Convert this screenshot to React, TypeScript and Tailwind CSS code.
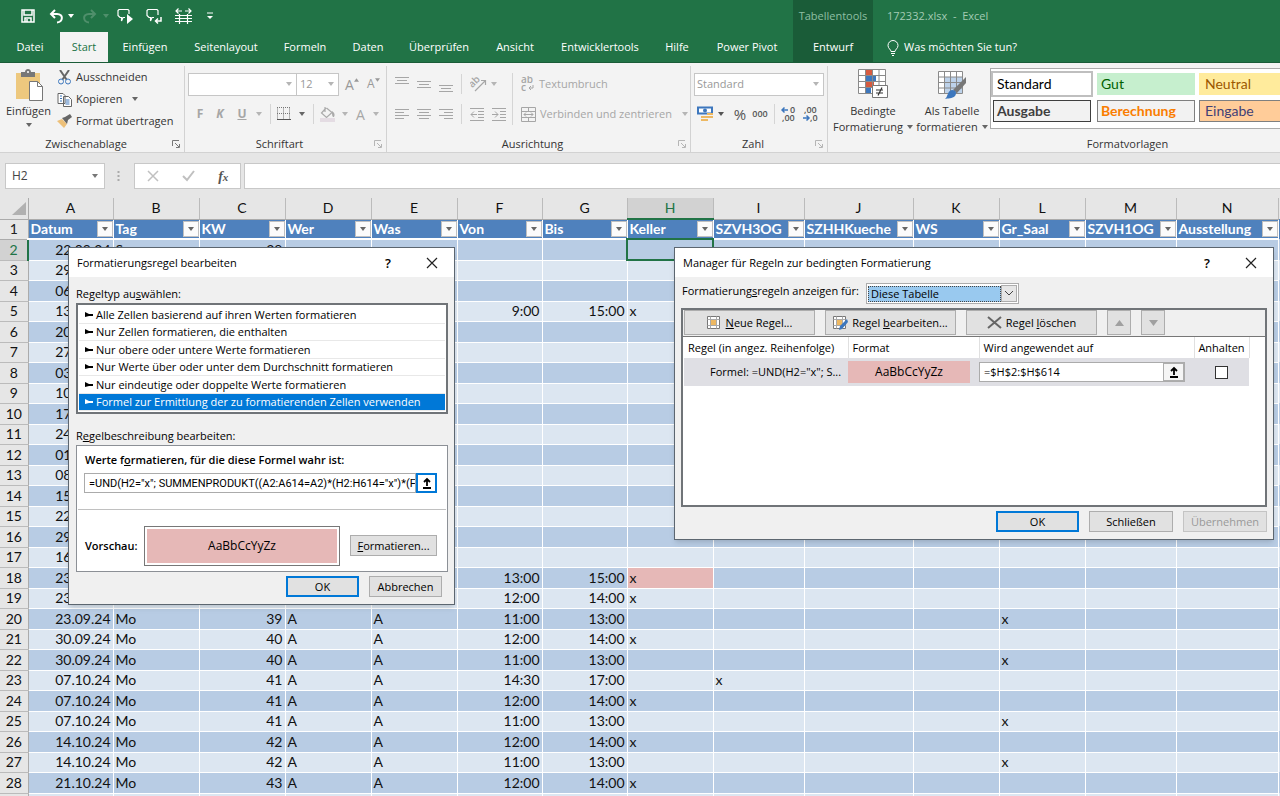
import type { ReactNode } from 'react'

const tabs = [
  { name: 'Datei', width: 'w-[60px]' },
  { name: 'Start', width: 'w-12', active: true },
  { name: 'Einfügen', width: 'w-[74px]' },
  { name: 'Seitenlayout', width: 'w-[88px]' },
  { name: 'Formeln', width: 'w-[70px]' },
  { name: 'Daten', width: 'w-14' },
  { name: 'Überprüfen', width: 'w-[86px]' },
  { name: 'Ansicht', width: 'w-[66px]' },
  { name: 'Entwicklertools', width: 'w-[104px]' },
  { name: 'Hilfe', width: 'w-[50px]' },
  { name: 'Power Pivot', width: 'w-[90px]' },
]

const columns = [
  { letter: 'A', title: 'Datum', width: 'w-[85px]' },
  { letter: 'B', title: 'Tag', width: 'w-[86px]' },
  { letter: 'C', title: 'KW', width: 'w-[86px]' },
  { letter: 'D', title: 'Wer', width: 'w-[86px]' },
  { letter: 'E', title: 'Was', width: 'w-[86px]' },
  { letter: 'F', title: 'Von', width: 'w-[85px]' },
  { letter: 'G', title: 'Bis', width: 'w-[85px]' },
  { letter: 'H', title: 'Keller', width: 'w-[86px]' },
  { letter: 'I', title: 'SZVH3OG', width: 'w-[91px]' },
  { letter: 'J', title: 'SZHHKueche', width: 'w-[109px]' },
  { letter: 'K', title: 'WS', width: 'w-[86px]' },
  { letter: 'L', title: 'Gr_Saal', width: 'w-[86px]' },
  { letter: 'M', title: 'SZVH1OG', width: 'w-[91px]' },
  { letter: 'N', title: 'Ausstellung', width: 'w-[102px]' },
]

// Datum, Tag, KW, Wer, Was, Von, Bis, column holding the x
const rows = [
  ['22.09.24', 'So', '38'],
  ['29.09.24', 'So', '39'],
  ['06.10.24', 'So', '40'],
  ['13.10.24', 'So', '41', 'A', 'A', '9:00', '15:00', 'H'],
  ['20.10.24', 'So', '42'],
  ['27.10.24', 'So', '43'],
  ['03.11.24', 'So', '44'],
  ['10.11.24', 'So', '45'],
  ['17.11.24', 'So', '46'],
  ['24.11.24', 'So', '47'],
  ['01.12.24', 'So', '48'],
  ['08.12.24', 'So', '49'],
  ['15.12.24', 'So', '50'],
  ['22.12.24', 'So', '51'],
  ['29.12.24', 'So', '52'],
  ['16.09.24', 'Mo', '38'],
  ['23.09.24', 'Mo', '39', 'A', 'A', '13:00', '15:00', 'H'],
  ['23.09.24', 'Mo', '39', 'A', 'A', '12:00', '14:00', 'H'],
  ['23.09.24', 'Mo', '39', 'A', 'A', '11:00', '13:00', 'L'],
  ['30.09.24', 'Mo', '40', 'A', 'A', '12:00', '14:00', 'H'],
  ['30.09.24', 'Mo', '40', 'A', 'A', '11:00', '13:00', 'L'],
  ['07.10.24', 'Mo', '41', 'A', 'A', '14:30', '17:00', 'I'],
  ['07.10.24', 'Mo', '41', 'A', 'A', '12:00', '14:00', 'H'],
  ['07.10.24', 'Mo', '41', 'A', 'A', '11:00', '13:00', 'L'],
  ['14.10.24', 'Mo', '42', 'A', 'A', '12:00', '14:00', 'H'],
  ['14.10.24', 'Mo', '42', 'A', 'A', '11:00', '13:00', 'L'],
  ['21.10.24', 'Mo', '43', 'A', 'A', '12:00', '14:00', 'H'],
  [],
]

const ruleTypes = [
  'Alle Zellen basierend auf ihren Werten formatieren',
  'Nur Zellen formatieren, die enthalten',
  'Nur obere oder untere Werte formatieren',
  'Nur Werte über oder unter dem Durchschnitt formatieren',
  'Nur eindeutige oder doppelte Werte formatieren',
  'Formel zur Ermittlung der zu formatierenden Zellen verwenden',
]

function Caret({ className = 'text-[#666]' }: { className?: string }) {
  return (
    <svg width="6" height="4" viewBox="0 0 6 4" className={`shrink-0 ${className}`}>
      <path d="M0 0h6L3 4z" fill="currentColor" />
    </svg>
  )
}

function IconButton({
  label,
  className = '',
  children,
}: {
  label: string
  className?: string
  children: ReactNode
}) {
  return (
    <button aria-label={label} className={`flex items-center justify-center shrink-0 ${className}`}>
      {children}
    </button>
  )
}

function Lines({ d }: { d: string }) {
  return (
    <svg width="14" height="16" viewBox="0 0 14 16" className="text-[#a6a6a6]">
      <path d={d} stroke="currentColor" fill="none" />
    </svg>
  )
}

function Group({
  title,
  width,
  launcher,
  children,
}: {
  title: string
  width: string
  launcher?: string
  children: ReactNode
}) {
  return (
    <section className={`flex flex-col mt-[3px] border-r border-[#d2d2d2] ${width}`}>
      <div className="flex-1 min-h-0">{children}</div>
      <div className="flex items-center h-4 pr-1">
        <h2 className="flex-1 text-center text-[11px] leading-[16px] text-[#333]">{title}</h2>
        {launcher && (
          <IconButton label={`${title} öffnen`} className={launcher}>
            <svg width="8" height="8" viewBox="0 0 8 8">
              <path d="M.5 6V.5H7M3 3l4 4M7.500 4v3.500H4" fill="none" stroke="currentColor" />
            </svg>
          </IconButton>
        )}
      </div>
    </section>
  )
}

function TitleBar() {
  return (
    <header className="flex h-[63px] bg-[#217346] text-white border-b border-[#1a5c38]">
      <div className="flex flex-col w-[793px]">
        <div className="flex items-center h-[33px] pl-[21px]">
          <IconButton label="Speichern">
            <svg width="14" height="14" viewBox="0 0 14 14">
              <path d="M1 1h12v12H1zM3 1v5h8V1M4 13V9h6v4M6 10v3" fill="none" stroke="white" strokeWidth="1.500" />
            </svg>
          </IconButton>
          <IconButton label="Rückgängig" className="ml-3.5 gap-1">
            <svg width="15" height="15" viewBox="0 0 15 15">
              <path d="M6 1L2 5l4 4M2 5h6c7 0 6 8 0 8.500" fill="none" stroke="white" strokeWidth="2" />
            </svg>
            <Caret className="text-white" />
          </IconButton>
          <IconButton label="Wiederholen" className="ml-2 gap-1.5 text-[#4f8f6b]">
            <svg width="15" height="15" viewBox="0 0 15 15">
              <path d="M9 1l4 4-4 4M13 5H7c-7 0-6 8 0 8.500" fill="none" stroke="currentColor" strokeWidth="2" />
            </svg>
            <Caret className="text-[#4f8f6b]" />
          </IconButton>
          <IconButton label="Nächster Kommentar" className="ml-2">
            <svg width="17" height="17" viewBox="0 0 17 17">
              <path d="M8 9.500H6L4.500 13V9.500H3l-2-2v-5l1-1h9l1 1V6" fill="none" stroke="white" strokeWidth="1.200" />
              <path d="M10 6l6 5-6 5z" fill="white" />
            </svg>
          </IconButton>
          <IconButton label="Vorheriger Kommentar" className="ml-3">
            <svg width="17" height="17" viewBox="0 0 17 17">
              <path d="M8 9.500H6L4.500 13V9.500H3l-2-2v-5l1-1h9l1 1V7" fill="none" stroke="white" strokeWidth="1.200" />
              <path d="M15 9v4h-5M12 10.500L9.500 13l2.500 2.500" fill="none" stroke="white" strokeWidth="1.500" />
            </svg>
          </IconButton>
          <IconButton label="Spaltenbreite" className="ml-3">
            <svg width="17" height="16" viewBox="0 0 17 16">
              <path d="M1 3h6M10 3h6M3.500.5L1 3l2.500 2.500M13.500.5L16 3l-2.500 2.500M0 7.500h17M0 10.500h17M0 13.500h17M4.500 6v10M12.500 6v10" fill="none" stroke="white" strokeWidth="1.200" />
            </svg>
          </IconButton>
          <IconButton label="Symbolleiste anpassen" className="ml-3.5">
            <svg width="8" height="8" viewBox="0 0 8 8">
              <path d="M1 1h6" stroke="white" />
              <path d="M1 4h6L4 7z" fill="white" />
            </svg>
          </IconButton>
        </div>
        <nav className="flex flex-1 text-[11px] font-medium">
          {tabs.map((tab) => (
            <button
              key={tab.name}
              className={`${tab.width} shrink-0 whitespace-nowrap ${
                tab.active ? 'bg-[#f3f3f3] text-[#217346] h-[30px]' : ''
              }`}
            >
              {tab.name}
            </button>
          ))}
        </nav>
      </div>
      <div className="flex flex-col w-20 bg-[#1a5c38]">
        <span className="h-[33px] leading-[32px] text-center text-[11px] text-[#8ebfa3]">Tabellentools</span>
        <button className="flex-1 text-[11px] font-medium">Entwurf</button>
      </div>
      <div className="flex flex-col flex-1 pl-3.5">
        <span className="h-[33px] leading-[32px] text-[11px] text-[#a3cbb4] whitespace-pre">172332.xlsx  -  Excel</span>
        <button className="flex flex-1 items-center gap-[5px] text-[11px] font-medium">
          <svg width="12" height="16" viewBox="0 0 12 16">
            <path d="M4 11.500c0-2-3-3-3-6a5 5 0 0110 0c0 3-3 4-3 6zM4 13.500h4M5 15.500h2" fill="none" stroke="white" />
          </svg>
          Was möchten Sie tun?
        </button>
      </div>
    </header>
  )
}

function Clipboard() {
  return (
    <Group title="Zwischenablage" width="w-[185px]" launcher="text-[#777]">
      <div className="flex">
        <button className="flex flex-col items-center w-[57px] pt-[3px] text-[11px] leading-[16px]">
          <svg width="30" height="32" viewBox="0 0 30 32">
            <rect x="2" y="4" width="24" height="26" fill="#edc87e" />
            <path d="M7 3h4c0-4 6-4 6 0h4v5H7z" fill="#777" />
            <circle cx="14" cy="3" r="1" fill="white" />
            <path d="M15.500 12.500h8l5 5v14h-13z" fill="white" stroke="#777" />
            <path d="M23.500 12.500v5h5" fill="none" stroke="#777" />
          </svg>
          <span className="mt-0.5">Einfügen</span>
          <Caret className="mt-1 text-[#666]" />
        </button>
        <div className="flex flex-col text-[11px]">
          <button className="flex items-center h-[22px] gap-1">
            <svg width="15" height="15" viewBox="0 0 15 15">
              <path d="M3 0l6.500 9.500M12 0L5.500 9.500" stroke="#666" strokeWidth="2" />
              <circle cx="4" cy="11.500" r="2.500" fill="none" stroke="#3d77bd" />
              <circle cx="11" cy="11.500" r="2.500" fill="none" stroke="#3d77bd" />
            </svg>
            Ausschneiden
          </button>
          <button className="flex items-center h-[22px] gap-1">
            <svg width="15" height="15" viewBox="0 0 15 15">
              <path d="M1 1.500h5l2 2v8H1zM6.500 4.500h5l3 3v7h-8z" fill="white" stroke="#666" />
              <path d="M3 4h2M3 6.500h2M3 9h2M8.500 8h4M8.500 10h4M8.500 12h4" stroke="#3d77bd" />
            </svg>
            Kopieren
            <Caret className="ml-1.5 text-[#666]" />
          </button>
          <button className="flex items-center h-[22px] gap-1">
            <svg width="15" height="14" viewBox="0 0 15 14">
              <path d="M0 7l5-2 5 5-3 4z" fill="#edc079" />
              <path d="M5 4l3-1 5-3 2 3-4 3-1 4z" fill="#666" />
            </svg>
            Format übertragen
          </button>
        </div>
      </div>
    </Group>
  )
}

function Font() {
  return (
    <Group title="Schriftart" width="w-[202px]" launcher="text-[#b5b5b5]">
      <div className="flex items-center h-9 pl-[3px]">
        <div className="flex items-center w-[109px] h-[23px] bg-white border border-[#c6c6c6] pr-1">
          <select aria-label="Schriftart" className="flex-1 w-0 h-full appearance-none">
            <option></option>
          </select>
          <Caret className="text-[#b5b5b5]" />
        </div>
        <div className="flex items-center w-[42px] h-[23px] bg-white border border-l-0 border-[#c6c6c6] pl-[3px] pr-1">
          <select aria-label="Schriftgrad" className="flex-1 w-0 h-full appearance-none text-[11px] text-[#999]">
            <option>12</option>
          </select>
          <Caret className="text-[#b5b5b5]" />
        </div>
        <button aria-label="Schriftgrad vergrößern" className="flex w-[22px] ml-1.5 text-[14px] text-[#999]">
          A<svg width="5" height="4" viewBox="0 0 6 4" className="mt-1"><path d="M0 4h6L3 0z" fill="currentColor" /></svg>
        </button>
        <button aria-label="Schriftgrad verkleinern" className="flex items-center w-4 text-[12px] text-[#999]">
          A<svg width="5" height="4" viewBox="0 0 6 4" className="mb-2"><path d="M0 0h6L3 4z" fill="currentColor" /></svg>
        </button>
      </div>
      <div className="flex items-center h-6 pl-[9px] text-[12px] text-[#a6a6a6]">
        <button className="w-3 font-bold">F</button>
        <button className="w-3 ml-2 font-bold italic">K</button>
        <button className="w-3 ml-2.5 font-bold underline">U</button>
        <Caret className="ml-2 text-[#b5b5b5]" />
        <span className="w-px h-5 ml-2 bg-[#d5d5d5]" />
        <IconButton label="Rahmen" className="ml-1.5 gap-2">
          <svg width="14" height="14" viewBox="0 0 14 14">
            <path d="M.5.500v12M6.500.500v12M12.500.500v12M0 .5h13M0 6.500h13" stroke="#777" strokeDasharray="1 1" />
            <path d="M0 12.500h14" stroke="#555" />
          </svg>
          <Caret className="text-[#666]" />
        </IconButton>
        <span className="w-px h-5 ml-2 bg-[#d5d5d5]" />
        <IconButton label="Füllfarbe" className="ml-1.5 gap-1.5">
          <svg width="16" height="16" viewBox="0 0 16 16">
            <path d="M5 1v5M6 2L1.500 7l5 4.500L12 6.500 6.500 2" fill="none" stroke="#aaa" strokeWidth="1.200" />
            <path d="M12 5c3 2 3 4 2 6-2 0-2-2-2-6z" fill="#aaa" />
            <path d="M0 12h15v4H0z" fill="#e4dce3" />
          </svg>
          <Caret className="text-[#b5b5b5]" />
        </IconButton>
        <button aria-label="Schriftfarbe" className="flex items-center gap-2 ml-2 text-[14px]">
          A
          <Caret className="text-[#b5b5b5]" />
        </button>
      </div>
    </Group>
  )
}

function Alignment() {
  return (
    <Group title="Ausrichtung" width="w-[304px]" launcher="text-[#b5b5b5]">
      <div className="flex pl-2 pt-[3px]">
        <div className="flex flex-col">
          <div className="flex items-center gap-2 h-[30px]">
            <IconButton label="Oben ausrichten"><Lines d="M0 1.500h14M2 4.500h10M0 7.500h14" /></IconButton>
            <IconButton label="Zentriert ausrichten"><Lines d="M0 5.500h14M2 8.500h10M0 11.500h14" /></IconButton>
            <IconButton label="Unten ausrichten"><Lines d="M0 9.500h14M2 12.500h10M0 15.500h14" /></IconButton>
            <span className="w-px h-5 bg-[#d5d5d5]" />
            <IconButton label="Ausrichtung drehen" className="gap-1 text-[#a6a6a6]">
              <svg width="17" height="16" viewBox="0 0 17 16">
                <text x="0" y="9" fontSize="10" fill="currentColor" transform="rotate(-45 5 8)" fontWeight="600">ab</text>
                <path d="M5 15L15 5M11 4.500h4.500V9" fill="none" stroke="currentColor" strokeWidth="1.200" />
              </svg>
              <Caret className="text-[#b5b5b5]" />
            </IconButton>
          </div>
          <div className="flex items-center gap-2 h-[30px]">
            <IconButton label="Linksbündig"><Lines d="M0 3.500h14M0 6.500h9M0 9.500h14M0 12.500h9" /></IconButton>
            <IconButton label="Zentriert"><Lines d="M0 3.500h14M2 6.500h10M0 9.500h14M2 12.500h10" /></IconButton>
            <IconButton label="Rechtsbündig"><Lines d="M0 3.500h14M5 6.500h9M0 9.500h14M5 12.500h9" /></IconButton>
            <span className="w-px h-5 bg-[#d5d5d5]" />
            <IconButton label="Einzug verkleinern"><Lines d="M0 2.500h14M8 5.500h6M8 8.500h6M8 11.500h6M0 14.500h14M7 8.500H1M4 5.500l-3 3 3 3" /></IconButton>
            <IconButton label="Einzug vergrößern"><Lines d="M0 2.500h14M8 5.500h6M8 8.500h6M8 11.500h6M0 14.500h14M0 8.500h6M3 5.500l3 3-3 3" /></IconButton>
          </div>
        </div>
        <span className="w-px h-[52px] mt-1 ml-1.5 bg-[#d5d5d5]" />
        <div className="flex flex-col pl-2 text-[11px] text-[#a6a6a6]">
          <button className="flex items-center h-[30px] gap-1">
            <svg width="14" height="16" viewBox="0 0 14 16" fill="currentColor">
              <text x="0" y="7" fontSize="10" fontWeight="600">ab</text>
              <text x="0" y="15" fontSize="10" fontWeight="600">c</text>
              <path d="M12 9v3H8M10 10l-2 2 2 2" fill="none" stroke="currentColor" />
            </svg>
            Textumbruch
          </button>
          <button className="flex items-center h-[30px] gap-1 whitespace-nowrap">
            <svg width="15" height="15" viewBox="0 0 15 15">
              <path d="M.5.500h14v14H.5zM.5 4.500h14M.5 10.500h14M7.500.500v4M7.500 10.500v4M3 7.500h9M5 5.500l-2 2 2 2M10 5.500l2 2-2 2" fill="none" stroke="currentColor" />
            </svg>
            Verbinden und zentrieren
            <Caret className="ml-1.5 text-[#b5b5b5]" />
          </button>
        </div>
      </div>
    </Group>
  )
}

function NumberGroup() {
  return (
    <Group title="Zahl" width="w-[137px]" launcher="text-[#b5b5b5]">
      <div className="flex items-center h-9 px-[3px]">
        <div className="flex items-center flex-1 h-[23px] bg-white border border-[#c6c6c6] pl-0.5 pr-1">
          <select aria-label="Zahlenformat" className="flex-1 w-0 h-full appearance-none text-[11px] text-[#999]">
            <option>Standard</option>
          </select>
          <Caret className="text-[#b5b5b5]" />
        </div>
      </div>
      <div className="flex items-center h-6 pl-1.5">
        <IconButton label="Buchhaltungszahlenformat" className="gap-1">
          <svg width="17" height="16" viewBox="0 0 17 16">
            <path d="M1 1.500h14v6H1z" fill="white" stroke="#3d77bd" strokeWidth="2" />
            <circle cx="8" cy="4.500" r="2" fill="#3d77bd" />
            <path d="M10 8h6M4 11h6M10 11h6M4 14h7" stroke="#edb862" strokeWidth="2" />
          </svg>
          <Caret className="text-[#555]" />
        </IconButton>
        <button className="w-4 ml-2 text-[15px] text-[#555]">%</button>
        <button className="w-4 ml-1 text-[9px] font-semibold text-[#555]">000</button>
        <span className="w-px h-5 ml-1.5 bg-[#d5d5d5]" />
        <IconButton label="Dezimalstelle hinzufügen" className="ml-1.5">
          <svg width="16" height="16" viewBox="0 0 16 16" fontSize="9" fontWeight="600" fill="#555">
            <path d="M7 4H1M3.500 1.500L1 4l2.500 2.500" fill="none" stroke="#3d77bd" strokeWidth="1.500" />
            <text x="9" y="7">0</text>
            <text x="1" y="15">,00</text>
          </svg>
        </IconButton>
        <IconButton label="Dezimalstelle löschen" className="ml-1.5">
          <svg width="16" height="16" viewBox="0 0 16 16" fontSize="9" fontWeight="600" fill="#555">
            <text x="1" y="7">,00</text>
            <text x="7" y="15">,0</text>
            <path d="M0 12h6M3.500 9.500L6 12l-2.500 2.500" fill="none" stroke="#3d77bd" strokeWidth="1.500" />
          </svg>
        </IconButton>
      </div>
    </Group>
  )
}

function Styles() {
  return (
    <section className="flex flex-col flex-1 min-w-0 mt-[3px]">
      <div className="flex flex-1 min-h-0">
        <button className="flex flex-col items-center w-[90px] pt-[3px] text-[11px] leading-[16px] whitespace-nowrap">
          <svg width="30" height="30" viewBox="0 0 30 30">
            <path d="M1 1h26v24H1z" fill="white" />
            <path d="M8 1h6v5H8zM8 13h8v5H8z" fill="#d65a3f" />
            <path d="M8 7h10v6H8zM8 19h5v6H8z" fill="#3d77bd" />
            <path d="M.5.500h27v24H.5zM0 6.500h27M0 12.500h27M0 18.500h27M7.500 0v24M14.500 0v24M21 0v24" fill="none" stroke="#8a8a8a" />
            <path d="M14.500 16.500h15v12h-15z" fill="white" stroke="#777" />
            <path d="M18 21h7M18 24h7M24 18.500l-4 8" stroke="#333" strokeWidth="1.200" />
          </svg>
          <span className="mt-1">Bedingte</span>
          <span className="flex items-center gap-1">Formatierung <Caret /></span>
        </button>
        <button className="flex flex-col items-center w-[68px] pt-[3px] text-[11px] leading-[16px] whitespace-nowrap">
          <svg width="30" height="30" viewBox="0 0 30 30">
            <path d="M1.500 2.500h24v22h-24z" fill="white" />
            <path d="M8 8h17v16H8z" fill="#bdd2ea" />
            <path d="M1.500 2.500h24v22h-24zM1 8h24M1 13.500h24M1 19h24M7.500 2v22M13.500 2v22M19.500 2v22" fill="none" stroke="#8a8a8a" />
            <path d="M29 8v6l-9 10-4-3z" fill="#777" />
            <path d="M15 21c4 0 5 3 3 6-3 3-7 2-10 3 3-2 2-8 7-9z" fill="#3d77bd" />
          </svg>
          <span className="mt-1">Als Tabelle</span>
          <span className="flex items-center gap-1">formatieren <Caret /></span>
        </button>
        <div className="flex-1 h-[61px] ml-1 mt-0.5 pt-0.5 bg-white border border-r-0 border-[#ababab] overflow-hidden">
          <div className="grid grid-cols-[102px_98px_98px] gap-x-1 gap-y-[3px] text-[14px] leading-[20px] text-left font-['Lato',sans-serif] items-center">
            <button className="h-[26px] pl-1 text-left border-2 border-[#bfbfbf] text-black">Standard</button>
            <button className="h-[22px] pl-1 text-left bg-[#c6efce] text-[#006100]">Gut</button>
            <button className="h-[22px] pl-1.5 text-left bg-[#ffeb9c] text-[#9c5700]">Neutral</button>
            <button className="h-[22px] mx-0.5 pl-[3px] text-left bg-[#f2f2f2] border border-[#3f3f3f] text-[#3f3f3f] font-bold">Ausgabe</button>
            <button className="h-[22px] pl-[3px] text-left bg-[#f2f2f2] border border-[#7f7f7f] text-[#fa7d00] font-bold">Berechnung</button>
            <button className="h-[22px] pl-[5px] text-left bg-[#ffcc99] border border-[#7f7f7f] text-[#3f3f76]">Eingabe</button>
          </div>
        </div>
      </div>
      <h2 className="h-4 pl-[147px] text-center text-[11px] leading-[16px] text-[#333]">Formatvorlagen</h2>
    </section>
  )
}

function FormulaBar() {
  return (
    <div className="flex h-[45px] pt-2.5 pl-[5px] bg-[#e6e6e6]">
      <div className="flex items-center w-[100px] h-[26px] px-1.5 bg-white border border-[#c8c8c8]">
        <input aria-label="Namenfeld" defaultValue="H2" className="flex-1 w-0 text-[12px] text-[#444] outline-none" />
        <Caret className="text-[#777]" />
      </div>
      <svg width="3" height="12" viewBox="0 0 3 12" className="ml-3 mt-[7px]">
        <path d="M1.500 1v2M1.500 5v2M1.500 9v2" stroke="#aaa" strokeWidth="2" />
      </svg>
      <div className="flex items-center justify-around w-[107px] h-[26px] ml-3.5 bg-white border border-[#c8c8c8]">
        <IconButton label="Abbrechen">
          <svg width="12" height="12" viewBox="0 0 12 12"><path d="M1 1l10 10M11 1L1 11" stroke="#c0c0c0" strokeWidth="1.500" /></svg>
        </IconButton>
        <IconButton label="Eingeben">
          <svg width="13" height="12" viewBox="0 0 13 12"><path d="M1 6l4 4 7-9" fill="none" stroke="#c0c0c0" strokeWidth="2" /></svg>
        </IconButton>
        <button className="font-['Liberation_Serif',serif] italic font-bold text-[14px] text-[#555]">
          f<span className="text-[11px]">x</span>
        </button>
      </div>
      <input aria-label="Bearbeitungsleiste" className="flex-1 h-[26px] ml-[3px] bg-white border border-r-0 border-[#c8c8c8] outline-none" />
    </div>
  )
}

function Sheet() {
  return (
    <table className="table-fixed w-full border-collapse font-['Lato',sans-serif] text-[14px] leading-[18px] text-[#111]">
      <colgroup>
        <col className="w-7" />
        {columns.map((col) => (
          <col key={col.letter} className={col.width} />
        ))}
        <col />
      </colgroup>
      <thead>
        <tr className="h-[21px] bg-[#e6e6e6]">
          <th className="p-0 border-r border-b border-[#ababab]">
            <svg width="14" height="13" viewBox="0 0 14 13" className="ml-auto mr-0.5">
              <path d="M14 0v13H0z" fill="#b1b1b1" />
            </svg>
          </th>
          {columns.map((col) => (
            <th
              key={col.letter}
              className={`p-0 font-normal border-r border-r-[#bbb] ${
                col.letter === 'H'
                  ? 'bg-[#d2d2d2] text-[#217346] border-b-2 border-b-[#217346]'
                  : 'border-b border-b-[#ababab]'
              }`}
            >
              {col.letter}
            </th>
          ))}
          <th className="p-0" />
        </tr>
        <tr className="h-5 bg-[#4f81bd] text-white">
          <th className="p-0 font-normal bg-[#e6e6e6] text-[#222] border-r border-b border-[#ababab]">1</th>
          {columns.map((col) => (
            <th key={col.letter} className="p-0 border-r border-b-2 border-white">
              <div className="flex items-center justify-between pl-0.5 h-[18px]">
                <span className="whitespace-nowrap">{col.title}</span>
                <IconButton label={`${col.title} filtern`} className="w-4 h-4 bg-[#fbfbfb] border border-[#c0c0c0]">
                  <Caret />
                </IconButton>
              </div>
            </th>
          ))}
          <th className="p-0" />
        </tr>
      </thead>
      <tbody>
        {rows.map((row, i) => {
          const [date, day, week, who, what, from, to, mark] = row
          const cells = [date, day, week, who, what, from, to]
          return (
            <tr key={i} className="h-[21px] even:h-5 bg-[#dce6f1] odd:bg-[#b8cce4]">
              <th
                className={`p-0 font-normal border-b border-b-[#bbb] border-r ${
                  i === 0 ? 'bg-[#d2d2d2] text-[#217346] border-r-2 border-r-[#217346]' : 'bg-[#e6e6e6] border-r-[#ababab]'
                }`}
              >
                {i + 2}
              </th>
              {columns.map((col, c) => {
                const right = [0, 2, 5, 6].includes(c)
                const hit = col.letter === 'H' && i === 16
                const selected = col.letter === 'H' && i === 0
                return (
                  <td
                    key={col.letter}
                    className={`p-0 pl-0.5 whitespace-nowrap border-r border-b border-white ${
                      right ? 'text-right pr-0.5' : ''
                    } ${hit ? 'bg-[#e6b8b7]' : ''} ${selected ? 'outline-2 -outline-offset-1 outline-[#217346]' : ''}`}
                  >
                    {c < 7 ? cells[c] : mark === col.letter ? 'x' : ''}
                  </td>
                )
              })}
              <td className="p-0" />
            </tr>
          )
        })}
      </tbody>
    </table>
  )
}

function DialogTitle({ children }: { children: ReactNode }) {
  return (
    <div className="flex items-center h-[29px] pl-2 pr-4 bg-white">
      <h2 className="flex-1 text-[11px]">{children}</h2>
      <button className="w-4 text-[13px] font-semibold">?</button>
      <IconButton label="Schließen" className="ml-[30px]">
        <svg width="12" height="12" viewBox="0 0 12 12"><path d="M1 1l10 10M11 1L1 11" stroke="#222" strokeWidth="1.200" /></svg>
      </IconButton>
    </div>
  )
}

function PushButton({
  className = 'border border-[#adadad]',
  children,
  disabled,
}: {
  className?: string
  children: ReactNode
  disabled?: boolean
}) {
  return (
    <button
      disabled={disabled}
      className={`flex items-center justify-center gap-1 shrink-0 bg-[#e1e1e1] text-[11px] whitespace-nowrap disabled:text-[#999] ${className}`}
    >
      {children}
    </button>
  )
}

function RefIcon() {
  return (
    <svg width="10" height="12" viewBox="0 0 10 12">
      <path d="M5 9V3M2 5l3-3 3 3M1 11h8" fill="none" stroke="black" strokeWidth="1.800" />
    </svg>
  )
}

function RuleDialog() {
  return (
    <div
      role="dialog"
      aria-label="Formatierungsregel bearbeiten"
      className="absolute left-[68px] top-[247px] w-[387px] bg-[#f0f0f0] border border-[#5c6670] shadow-md text-[11px] leading-[16px] text-black"
    >
      <DialogTitle>Formatierungsregel bearbeiten</DialogTitle>
      <div className="pl-[7px] pr-1.5 pt-[9px] pb-[7px]">
        <h3>Regeltyp au<u>s</u>wählen:</h3>
        <ul className="mt-px p-px bg-white border-2 border-[#707478]">
          {ruleTypes.map((type, i) => (
            <li
              key={type}
              className={`flex items-center gap-[3px] h-[18px] even:h-[17px] pl-1.5 whitespace-nowrap border-b border-[#e8e8e8] ${
                i === 5 ? 'bg-[#0078d7] text-white' : ''
              }`}
            >
              <svg width="8" height="6" viewBox="0 0 8 6" className="shrink-0">
                <path d="M0 0l4 2h4v2H4L0 5z" fill="currentColor" />
              </svg>
              {type}
            </li>
          ))}
        </ul>
        <h3 className="mt-3.5">R<u>e</u>gelbeschreibung bearbeiten:</h3>
        <div className="mt-px bg-white border border-[#8c9096] pt-1.5">
          <label htmlFor="formula" className="block pl-2 font-semibold">
            Werte f<u>o</u>rmatieren, für die diese Formel wahr ist:
          </label>
          <div className="flex items-center h-5 mt-[5px] pl-[7px] pr-2.5">
            <input
              id="formula"
              defaultValue='=UND(H2="x"; SUMMENPRODUKT((A2:A614=A2)*(H2:H614="x")*(F'
              className="flex-1 w-0 h-5 pl-1 border border-[#ababab] font-['Roboto',sans-serif] text-[11px] outline-none"
            />
            <IconButton label="Bereich auswählen" className="w-[21px] h-5 border-2 border-[#0078d7]">
              <RefIcon />
            </IconButton>
          </div>
          <hr className="mt-4 mx-px border-[#c0c0c0]" />
          <div className="flex items-center h-[61px] pl-2 pt-2.5">
            <span className="w-[59px] font-semibold">Vorschau:</span>
            <div className="w-[196px] h-10 p-0.5 border border-[#777] bg-white">
              <div className="h-full bg-[#e6b8b7] text-center text-[12px] leading-[34px]">AaBbCcYyZz</div>
            </div>
            <PushButton className="w-[87px] h-[21px] ml-2.5 border border-[#adadad]">
              <span><u>F</u>ormatieren...</span>
            </PushButton>
          </div>
        </div>
        <div className="flex justify-end gap-2.5 pt-1 pr-1.5">
          <PushButton className="w-[73px] h-[21px] border-2 border-[#0078d7]">OK</PushButton>
          <PushButton className="w-[73px] h-[21px] border border-[#adadad]">Abbrechen</PushButton>
        </div>
      </div>
    </div>
  )
}

function TableIcon({ pen }: { pen?: boolean }) {
  return (
    <svg width="15" height="14" viewBox="0 0 15 14">
      <path d="M.5.500h12v12H.5z" fill="white" stroke="#777" />
      <path d="M.5 3.500h12M.5 9.500h12M3.500.500v12M9.500.500v12" stroke="#aaa" />
      <path d="M4 4h5v5H4z" fill="#edb862" />
      {pen && <path d="M14 3L7 10l-1 4 3-1 6-7z" fill="#3d77bd" />}
    </svg>
  )
}

function ManagerDialog() {
  return (
    <div
      role="dialog"
      aria-label="Manager für Regeln zur bedingten Formatierung"
      className="absolute left-[674px] top-[247px] w-[600px] bg-[#f0f0f0] border border-[#5c6670] shadow-md text-[11px] leading-[16px] text-black"
    >
      <DialogTitle>Manager für Regeln zur bedingten Formatierung</DialogTitle>
      <div className="px-1.5 pb-[7px]">
        <div className="flex h-[31px]">
          <label htmlFor="scope" className="w-[185px] pt-1.5 pl-px whitespace-nowrap">
            Formatierung<u>s</u>regeln anzeigen für:
          </label>
          <div className="flex items-center w-[153px] h-[21px] mt-1.5 p-px bg-white border border-[#adadad]">
            <select
              id="scope"
              className="flex-1 w-0 h-4 pl-0.5 appearance-none bg-[#99c9ef] border border-dotted border-[#444] text-[11px] leading-[14px]"
            >
              <option>Diese Tabelle</option>
            </select>
            <span className="flex items-center justify-center w-4 h-[17px] bg-[#e6e6e6] border border-[#adadad]">
              <svg width="8" height="5" viewBox="0 0 8 5"><path d="M0 0l4 4 4-4" fill="none" stroke="#444" /></svg>
            </span>
          </div>
        </div>
        <div className="h-[199px] bg-white border-2 border-[#707478]">
          <div className="flex h-[27px] px-px gap-2.5 bg-[#f0f0f0] border-b border-[#777]">
            <PushButton className="w-[131px] h-[25px] border border-[#adadad]">
              <TableIcon />
              <span><u>N</u>eue Regel...</span>
            </PushButton>
            <PushButton className="w-[131px] h-[25px] border border-[#adadad]">
              <TableIcon pen />
              <span>Regel <u>b</u>earbeiten...</span>
            </PushButton>
            <PushButton className="w-[131px] h-[25px] border border-[#adadad]">
              <svg width="15" height="13" viewBox="0 0 15 13"><path d="M1 1l13 11M14 1L1 12" stroke="#666" strokeWidth="2" /></svg>
              <span>Regel <u>l</u>öschen</span>
            </PushButton>
            <IconButton label="Nach oben" className="w-6 h-[25px] bg-[#e1e1e1] border border-[#adadad]">
              <svg width="9" height="6" viewBox="0 0 9 6"><path d="M0 6h9L4.500 0z" fill="#a0a0a0" /></svg>
            </IconButton>
            <IconButton label="Nach unten" className="w-6 h-[25px] bg-[#e1e1e1] border border-[#adadad]">
              <svg width="9" height="6" viewBox="0 0 9 6"><path d="M0 0h9L4.500 6z" fill="#a0a0a0" /></svg>
            </IconButton>
          </div>
          <table className="table-fixed w-[565px] ml-px text-left whitespace-nowrap">
            <colgroup>
              <col className="w-[164px]" />
              <col className="w-[131px]" />
              <col className="w-[215px]" />
              <col className="w-[55px]" />
            </colgroup>
            <thead>
              <tr className="h-[21px]">
                <th className="p-0 pl-1 font-normal border-r border-[#e0e0e0]">Regel (in angez. Reihenfolge)</th>
                <th className="p-0 pl-1 font-normal border-r border-[#e0e0e0]">Format</th>
                <th className="p-0 pl-1 font-normal border-r border-[#e0e0e0]">Wird angewendet auf</th>
                <th className="p-0 text-center font-normal border-r border-[#e0e0e0]">Anhalten</th>
              </tr>
            </thead>
            <tbody>
              <tr className="h-[28px] bg-[#dfdfe4]">
                <td className="p-0 pl-[26px]">Formel: =UND(H2="x"; S...</td>
                <td className="p-0">
                  <div className="h-[22px] w-[122px] bg-[#e6b8b7] text-center text-[12px] leading-[22px]">AaBbCcYyZz</div>
                </td>
                <td className="p-0">
                  <div className="flex w-[206px] h-5 border border-[#ababab] bg-white">
                    <input
                      aria-label="Wird angewendet auf"
                      defaultValue="=$H$2:$H$614"
                      className="flex-1 w-0 px-1 text-[11px] outline-none"
                    />
                    <IconButton label="Bereich auswählen" className="w-[21px] border border-[#adadad] bg-[#f5f5f5]">
                      <RefIcon />
                    </IconButton>
                  </div>
                </td>
                <td className="p-0">
                  <input
                    type="checkbox"
                    aria-label="Anhalten"
                    className="block w-[13px] h-[13px] mx-auto appearance-none bg-white border border-[#333]"
                  />
                </td>
              </tr>
            </tbody>
          </table>
        </div>
        <div className="flex justify-end gap-2.5 pt-1">
          <PushButton className="w-[83px] h-[21px] border-2 border-[#0078d7]">OK</PushButton>
          <PushButton className="w-[84px] h-[21px] border border-[#adadad]">Schließen</PushButton>
          <PushButton disabled className="w-[84px] h-[21px] border border-[#c4c4c4]">Übernehmen</PushButton>
        </div>
      </div>
    </div>
  )
}

export default function App() {
  return (
    <main className="relative h-screen overflow-hidden bg-white font-['Open_Sans',sans-serif] text-[#333]">
      <TitleBar />
      <div className="flex h-[90px] bg-[#f3f3f3] border-b border-[#d2d2d2]">
        <Clipboard />
        <Font />
        <Alignment />
        <NumberGroup />
        <Styles />
      </div>
      <FormulaBar />
      <Sheet />
      <RuleDialog />
      <ManagerDialog />
    </main>
  )
}
